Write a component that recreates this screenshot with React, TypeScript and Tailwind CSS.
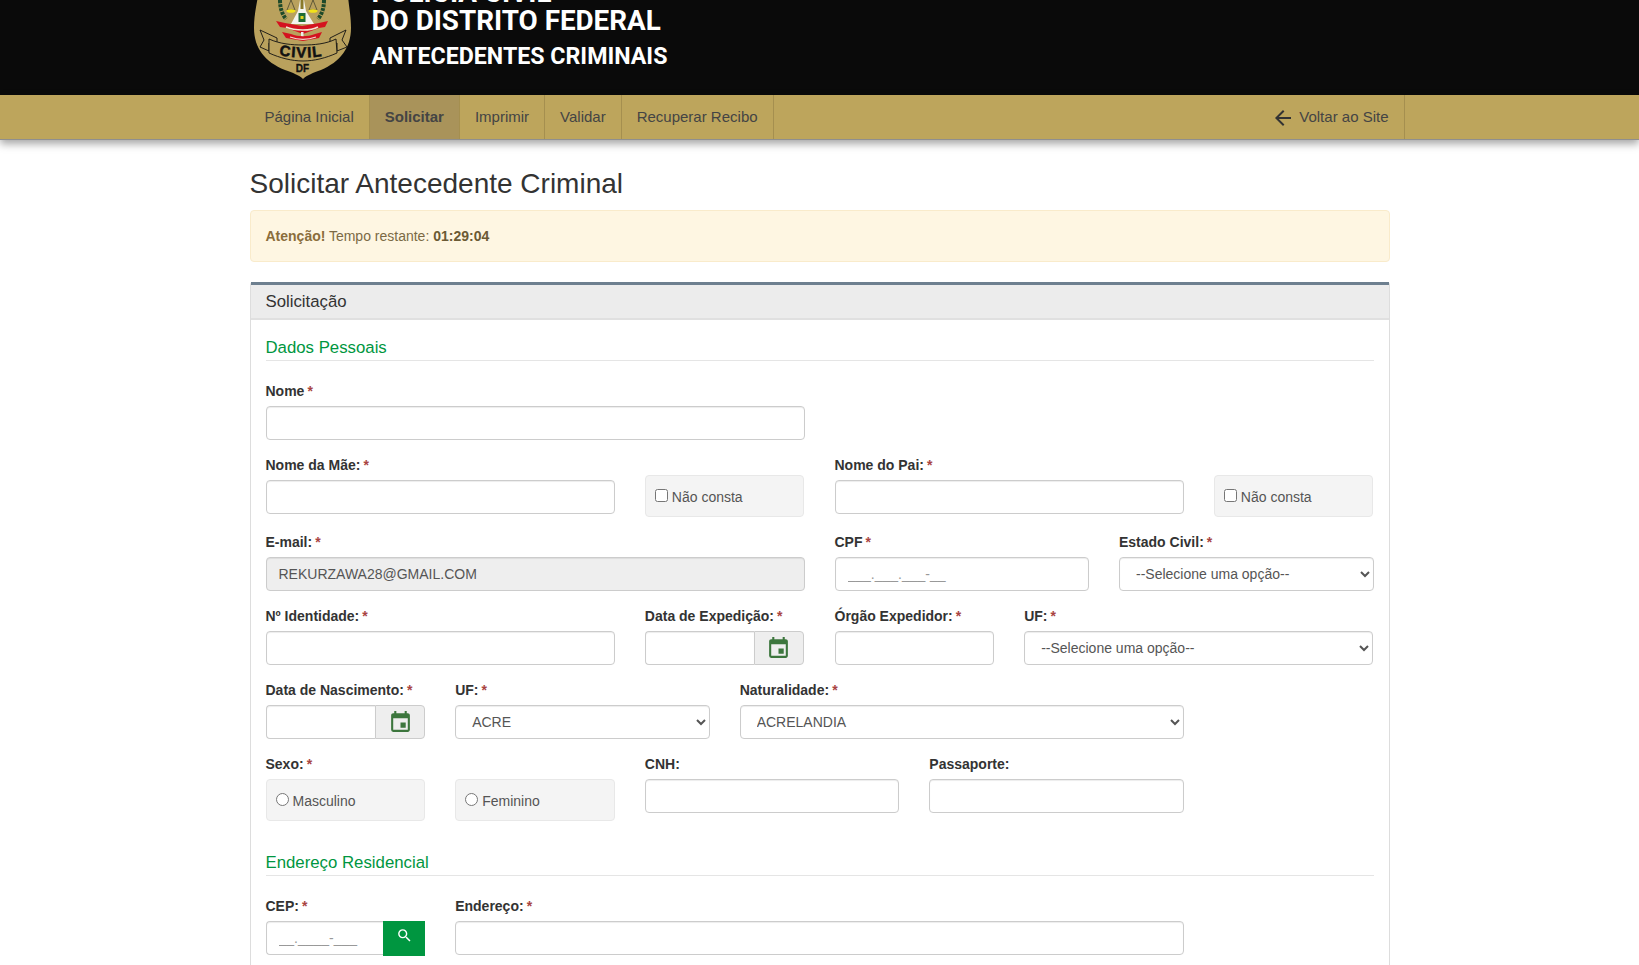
import React from 'react';
import { MdArrowBack, MdEvent, MdSearch } from 'react-icons/md';

const fieldClass =
  "block w-full h-[34px] px-3 bg-white border border-[#ccc] rounded-[4px] text-sm text-[#555] shadow-[inset_0_1px_1px_rgba(0,0,0,0.075)] placeholder:text-[#999]";

const selectClass =
  "block w-full h-[34px] px-3 bg-white border border-[#ccc] rounded-[4px] text-sm text-[#555] shadow-[inset_0_1px_1px_rgba(0,0,0,0.075)]";

const Logo = () => (
  <svg width="120" height="85" viewBox="0 0 120 85" className="shrink-0">
    <path d="M13 -4 C11 8 9 16 9 28 C9 48 20 62 40 70 C48 73 54 75 58 79 C62 75 68 73 76 70 C95 62 106 48 106 28 C106 16 104 8 103 -4 Z" fill="#b9a15d" />
    {/* wreath */}
    <path d="M35 0 C35 8 37 14 41 19" fill="none" stroke="#1f4a2a" strokeWidth="4" strokeDasharray="3 1" />
    <path d="M79 0 C79 8 77 14 73 19" fill="none" stroke="#1f4a2a" strokeWidth="4" strokeDasharray="3 1" />
    {/* scales */}
    <path d="M46 0 L42 10 L50 10 Z" fill="none" stroke="#3a3a2a" strokeWidth="0.7" />
    <path d="M68 0 L64 10 L72 10 Z" fill="none" stroke="#3a3a2a" strokeWidth="0.7" />
    <ellipse cx="46" cy="11" rx="4.5" ry="1.8" fill="#f2e21a" />
    <ellipse cx="68" cy="11" rx="4.5" ry="1.8" fill="#f2e21a" />
    {/* monument */}
    <path d="M55 0 L59 0 L61 11 L69 24 L46 24 L53 11 Z" fill="#f4f4ee" />
    <rect x="55.5" y="0" width="3" height="9" fill="#8a7a2a" />
    <rect x="53.5" y="13" width="7" height="9" fill="#1d6b34" />
    <rect x="55.5" y="16" width="3" height="3" fill="#e3d41f" />
    {/* red ribbons */}
    <path d="M31 21 L40 23 L57 26 L74 23 L83 21 L80 27 L74 28 L58 34 L42 28 L35 27 Z" fill="#d4121f" />
    <path d="M41 27 C50 31 66 31 73 27" fill="none" stroke="#f2e8d0" strokeWidth="1.6" />
    <rect x="56" y="32" width="2.5" height="5" fill="#eee" />
    <path d="M37 32 L46 34 C54 37 62 37 70 34 L77 32 L74 38 L58 41 L41 38 Z" fill="#d4121f" />
    <path d="M45 37 C53 40 63 40 71 37" fill="none" stroke="#f2d8d0" strokeWidth="1.2" />
    {/* scroll */}
    <path d="M15 30 L32 38 L32 46 L24 43 L24 51 L15 47 L19 40 Z" fill="none" stroke="#111" strokeWidth="0.9" />
    <path d="M101 30 L85 38 L85 46 L92 43 L92 51 L102 47 L97 40 Z" fill="none" stroke="#111" strokeWidth="0.9" />
    <path d="M24 39 C35 44 47 45 58 45 C69 45 81 44 91 39 L92 53 C81 58 69 61 58 61 C47 61 35 58 24 53 Z" fill="#b9a15d" stroke="#111" strokeWidth="0.9" />
    <path id="civilArc" d="M33 55 Q58 60 83 55" fill="none" />
    <text fontFamily="'Liberation Sans', sans-serif" fontWeight="700" fontSize="15" letterSpacing="1.2" stroke="#111" strokeWidth="0.5" fill="#111">
      <textPath href="#civilArc" startOffset="1">CIVIL</textPath>
    </text>
    <text x="57.5" y="72" textAnchor="middle" fontFamily="'Liberation Sans', sans-serif" fontWeight="700" fontSize="10" stroke="#111" strokeWidth="0.3" fill="#111">DF</text>
  </svg>
);

const Label = ({ text, required = true }: { text: string; required?: boolean }) => (
  <label className="block h-5 mb-[5px] text-sm leading-5 font-bold text-[#333]">
    {text}
    {required && <span className="ml-[3px] text-[#a94442]">*</span>}
  </label>
);

const Field = ({
  label,
  span,
  placeholder,
  value,
  required = true,
}: {
  label: string;
  span: string;
  placeholder?: string;
  value?: string;
  required?: boolean;
}) => (
  <div className={`${span} mb-[15px]`}>
    <Label text={label} required={required} />
    <input className={fieldClass} placeholder={placeholder} defaultValue={value} />
  </div>
);

const SelectField = ({ label, span, option }: { label: string; span: string; option: string }) => (
  <div className={`${span} mb-[15px]`}>
    <Label text={label} />
    <select className={selectClass} defaultValue={option}>
      <option>{option}</option>
    </select>
  </div>
);

const DateField = ({ label, extra = '' }: { label: string; extra?: string }) => (
  <div className={`col-span-2 mb-[15px] ${extra}`}>
    <Label text={label} />
    <div className="flex h-[34px]">
      <input className="min-w-0 flex-1 h-full px-3 bg-white border border-r-0 border-[#ccc] rounded-l-[4px] text-sm shadow-[inset_0_1px_1px_rgba(0,0,0,0.075)]" />
      <span className="flex w-[50px] items-center justify-center bg-[#eee] border border-[#ccc] rounded-r-[4px]">
        <MdEvent size={25} className="text-[#3c763d]" />
      </span>
    </div>
  </div>
);

const CheckBox = ({ type, text, extra }: { type: string; text: string; extra: string }) => (
  <div className={`col-span-2 ${extra} mb-[15px]`}>
    <label className="flex h-[42px] items-center gap-[4px] pl-[9px] bg-[#f4f4f4] border border-[#e8e8e8] rounded-[4px] text-sm text-[#555]">
      <input type={type} name={type === 'radio' ? 'sexo' : undefined} className="m-0 -mt-[1px] w-[13px] h-[13px]" />
      <span className="pt-[2px]">{text}</span>
    </label>
  </div>
);

const Section = ({ title, top }: { title: string; top: string }) => (
  <div className={`${top} mb-5 h-[28px] border-b border-[#e5e5e5] text-[16.8px] leading-[29px] text-[#009640]`}>{title}</div>
);

const navItems = ['Página Inicial', 'Solicitar', 'Imprimir', 'Validar', 'Recuperar Recibo'];

export default function App() {
  return (
    <div className="h-[965px] overflow-hidden bg-white font-['Liberation_Sans',Arial,sans-serif] text-sm text-[#333]">
      {/* Header */}
      <header className="h-[95px] overflow-hidden bg-[#0a0a0a]">
        <div className="mx-auto flex w-[1170px] pl-[10px]">
          <Logo />
          <div className="-mt-[21px] ml-[7px] font-['Roboto',sans-serif] font-bold text-white">
            <div className="text-[27.8px] leading-[28px]">POLICIA CIVIL</div>
            <div className="text-[27.8px] leading-[28px]">DO DISTRITO FEDERAL</div>
            <div className="mt-[6px] text-[23.2px] leading-[30px]">ANTECEDENTES CRIMINAIS</div>
          </div>
        </div>
      </header>

      {/* Menu */}
      <nav className="relative h-[45px] bg-[#bda55c] border-b border-[#8f8f8f] shadow-[0_4px_8px_rgba(0,0,0,0.35)]">
        <div className="mx-auto flex h-full w-[1170px] justify-between pl-[15px]">
          <ul className="flex">
            {navItems.map((item) => (
              <li
                key={item}
                className={
                  item === 'Solicitar'
                    ? 'flex items-center px-[15px] bg-[#a9935a] border-r border-[#a58f4f] text-[15px] font-bold text-[#444]'
                    : 'flex items-center px-[15px] border-r border-[#a58f4f] text-[15px] text-[#444]'
                }
              >
                {item}
              </li>
            ))}
          </ul>
          <div className="flex items-center gap-[4px] pl-[15px] pr-[15px] border-r border-[#a58f4f] text-[15px] text-[#444]">
            <MdArrowBack size={24} className="text-[#333] mt-[2px]" />
            {' '}Voltar ao Site
          </div>
        </div>
      </nav>

      <main className="mx-auto w-[1140px]">
        <h1 className="mt-[26px] mb-[8px] text-[28px] leading-[36px] text-[#333]">Solicitar Antecedente Criminal</h1>

        <div className="h-[52px] mb-5 flex items-center px-[15px] bg-[#fef6e2] border border-[#f9ebcb] rounded-[4px] text-sm text-[#7b6a45]">
          <strong className="text-[#8a6d3b]">Atenção!</strong>
          <span className="ml-[3.5px]">Tempo restante:</span>
          <strong className="ml-[4px] text-[#6b5a34]">01:29:04</strong>
        </div>

        <section className="border border-t-0 border-[#ddd] rounded-t-[3px]">
          <div className="h-[38px] px-[15px] bg-[#ececec] border-t-[3px] border-t-[#6d7f8f] border-b-[2px] border-b-[#e0e0e0] text-[16.8px] leading-[33px] text-[#333]">
            Solicitação
          </div>

          <div className="px-[15px] pt-[13px]">
            <Section title="Dados Pessoais" top="" />

            <div className="grid grid-cols-12 gap-x-[30px]">
              <Field label="Nome" span="col-span-6" />
            </div>

            <div className="grid grid-cols-12 gap-x-[30px]">
              <Field label="Nome da Mãe:" span="col-span-4" />
              <CheckBox type="checkbox" text="Não consta" extra="mt-5 mr-px" />
              <Field label="Nome do Pai:" span="col-span-4" />
              <CheckBox type="checkbox" text="Não consta" extra="mt-5 mr-px" />
            </div>

            <div className="grid grid-cols-12 gap-x-[30px]">
              <div className="col-span-6 mb-[15px]">
                <Label text="E-mail:" />
                <input
                  readOnly
                  defaultValue="REKURZAWA28@GMAIL.COM"
                  className="block w-full h-[34px] px-3 bg-[#eee] border border-[#ccc] rounded-[4px] text-sm text-[#555] shadow-[inset_0_1px_1px_rgba(0,0,0,0.075)]"
                />
              </div>
              <Field label="CPF" span="col-span-3" placeholder="___.___.___-__" />
              <SelectField label="Estado Civil:" span="col-span-3" option="--Selecione uma opção--" />
            </div>

            <div className="grid grid-cols-12 gap-x-[30px]">
              <Field label="Nº Identidade:" span="col-span-4" />
              <DateField label="Data de Expedição:" extra="mr-px" />
              <Field label="Órgão Expedidor:" span="col-span-2" />
              <SelectField label="UF:" span="col-span-4 mr-px" option="--Selecione uma opção--" />
            </div>

            <div className="grid grid-cols-12 gap-x-[30px]">
              <DateField label="Data de Nascimento:" />
              <SelectField label="UF:" span="col-span-3" option="ACRE" />
              <SelectField label="Naturalidade:" span="col-span-5" option="ACRELANDIA" />
            </div>

            <div className="grid grid-cols-12 gap-x-[30px]">
              <div className="col-span-2 mb-[15px]">
                <Label text="Sexo:" />
                <label className="flex h-[42px] items-center gap-[4px] pl-[9px] bg-[#f4f4f4] border border-[#e8e8e8] rounded-[4px] text-sm text-[#555]">
                  <input type="radio" name="sexo" className="m-0 -mt-[1px] w-[13px] h-[13px]" />
                  <span className="pt-[2px]">Masculino</span>
                </label>
              </div>
              <CheckBox type="radio" text="Feminino" extra="mt-[25px]" />
              <Field label="CNH:" span="col-span-3" required={false} />
              <Field label="Passaporte:" span="col-span-3" required={false} />
            </div>

            <Section title="Endereço Residencial" top="mt-[12px]" />

            <div className="grid grid-cols-12 gap-x-[30px]">
              <div className="col-span-2 mb-[15px]">
                <Label text="CEP:" />
                <div className="flex h-[34px]">
                  <input
                    placeholder="__.____-___"
                    className="min-w-0 flex-1 h-full px-3 bg-white border border-r-0 border-[#ccc] rounded-l-[4px] text-sm placeholder:text-[#999] shadow-[inset_0_1px_1px_rgba(0,0,0,0.075)]"
                  />
                  <button className="flex w-[42px] h-[35px] items-start justify-center pt-[6px] bg-[#009640] text-white">
                    <MdSearch size={17} />
                  </button>
                </div>
              </div>
              <Field label="Endereço:" span="col-span-8" />
            </div>
          </div>
        </section>
      </main>
    </div>
  );
}
